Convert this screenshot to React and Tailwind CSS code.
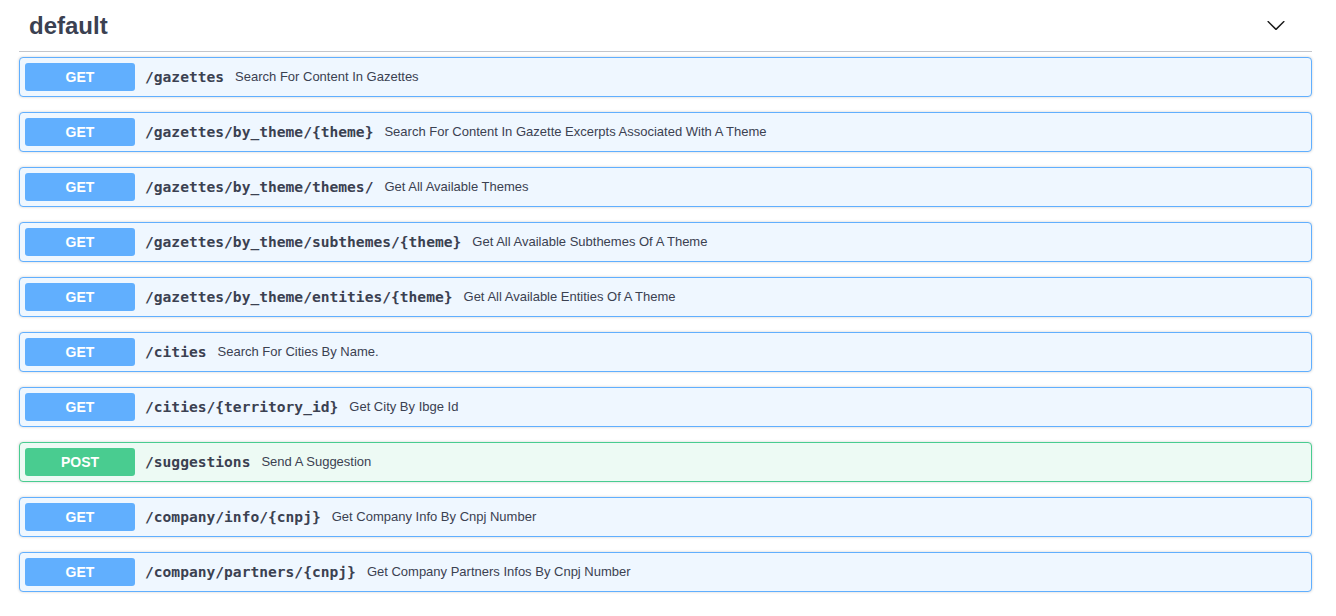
const endpoints = [
  { method: "GET", path: "/gazettes", summary: "Search For Content In Gazettes" },
  { method: "GET", path: "/gazettes/by_theme/{theme}", summary: "Search For Content In Gazette Excerpts Associated With A Theme" },
  { method: "GET", path: "/gazettes/by_theme/themes/", summary: "Get All Available Themes" },
  { method: "GET", path: "/gazettes/by_theme/subthemes/{theme}", summary: "Get All Available Subthemes Of A Theme" },
  { method: "GET", path: "/gazettes/by_theme/entities/{theme}", summary: "Get All Available Entities Of A Theme" },
  { method: "GET", path: "/cities", summary: "Search For Cities By Name." },
  { method: "GET", path: "/cities/{territory_id}", summary: "Get City By Ibge Id" },
  { method: "POST", path: "/suggestions", summary: "Send A Suggestion" },
  { method: "GET", path: "/company/info/{cnpj}", summary: "Get Company Info By Cnpj Number" },
  { method: "GET", path: "/company/partners/{cnpj}", summary: "Get Company Partners Infos By Cnpj Number" }
];

const styles = {
  GET: {
    row: "border-[#61affe] bg-[#eff7ff]",
    badge: "bg-[#61affe]"
  },
  POST: {
    row: "border-[#49cc90] bg-[#edfaf4]",
    badge: "bg-[#49cc90]"
  }
};

const Endpoint = ({ method, path, summary }) => {
  const s = styles[method];
  return (
    <div
      className={`mb-[15px] flex items-center rounded-[4px] border p-[5px] shadow-[0_0_3px_rgba(0,0,0,0.19)] ${s.row}`}
    >
      <span
        className={`flex h-[28px] w-[110px] shrink-0 items-center justify-center rounded-[3px] text-[14px] font-bold text-white ${s.badge}`}
      >
        {method}
      </span>
      <span className="pl-[10px] pr-[11px] font-['DejaVu_Sans_Mono',monospace] text-[14.6px] font-bold text-[#3b4151]">
        {path}
      </span>
      <span className="text-[13px] text-[#3b4151]">{summary}</span>
    </div>
  );
};

export default function App() {
  return (
    <div className="min-h-screen bg-white font-['Liberation_Sans',Arial,sans-serif]">
      <div className="ml-[19px] w-[1293px]">
        {/* tag header */}
        <div className="mb-[5px] flex h-[52px] items-center justify-between border-b border-[#c4c6cb] pl-[10px] pr-[26px]">
          <h3 className="text-[24px] font-bold text-[#3b4151]">default</h3>
          <svg width="20" height="20" viewBox="0 0 20 20" className="mt-[-2px] fill-[#1a1a1a]">
            <path d="M17.418 6.109c.272-.268.709-.268.979 0s.271.701 0 .969l-7.908 7.83c-.27.268-.707.268-.979 0l-7.908-7.83c-.27-.268-.27-.701 0-.969.271-.268.709-.268.979 0L10 13.25l7.418-7.141z" />
          </svg>
        </div>

        {endpoints.map((e) => (
          <Endpoint key={e.path} {...e} />
        ))}
      </div>
    </div>
  );
}
